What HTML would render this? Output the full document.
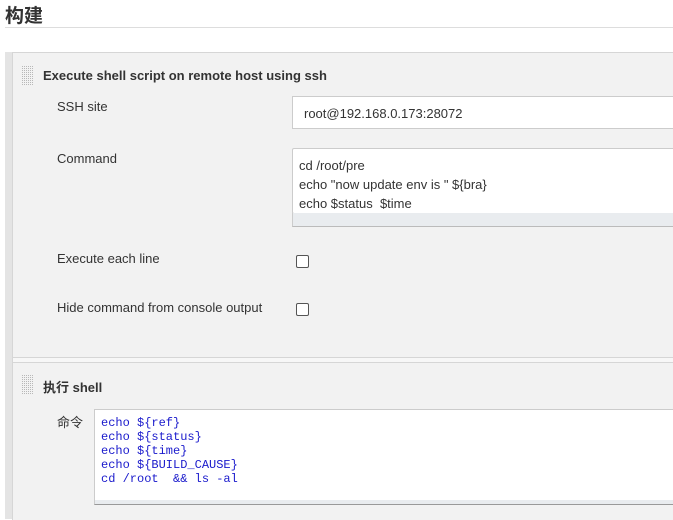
<!DOCTYPE html>
<html><head><meta charset="utf-8"><style>
body{margin:0;width:673px;height:519px;overflow:hidden;background:#fff;font-family:"Liberation Sans","Noto Sans CJK SC",sans-serif;color:#333;position:relative}
.a{position:absolute}
.lbl{font-size:13px;color:#333}
.cb{width:11px;height:11px;border:1px solid #555;border-radius:2px;background:#fff}
</style></head><body>
<svg width="0" height="0" style="position:absolute"><defs><pattern id="d" width="2" height="2" patternUnits="userSpaceOnUse"><rect width="1" height="1" fill="#b8b8b8"/></pattern></defs></svg>
<div class="a" style="left:5px;top:1px;font-size:19px;font-weight:bold;color:#333">构建</div>
<div class="a" style="left:5px;top:27px;width:668px;height:1px;background:#ddd"></div>
<div class="a" style="left:5px;top:52px;width:7px;height:467px;background:#e4e4e4"></div>
<div class="a" style="left:12px;top:52px;width:661px;height:467px;background:#f2f2f2;border-left:1px solid #d6d6d6;border-top:1px solid #d6d6d6"></div>
<div class="a" style="left:13px;top:357px;width:660px;height:1px;background:#d6d6d6"></div>
<div class="a" style="left:13px;top:358px;width:660px;height:4px;background:#f7f7f7"></div>
<div class="a" style="left:13px;top:362px;width:660px;height:1px;background:#d6d6d6"></div>

<svg class="a" style="left:22px;top:66px" width="12" height="20"><rect width="12" height="20" fill="url(#d)"/></svg>
<div class="a" style="left:43px;top:68px;font-size:13px;font-weight:bold;color:#333">Execute shell script on remote host using ssh</div>
<div class="a lbl" style="left:57px;top:99px">SSH site</div>
<div class="a" style="left:292px;top:96px;width:381px;height:31px;background:#fff;border:1px solid #ccc;border-right:none"></div>
<div class="a lbl" style="left:304px;top:106px">root@192.168.0.173:28072</div>
<div class="a lbl" style="left:57px;top:151px">Command</div>
<div class="a" style="left:292px;top:148px;width:381px;height:64px;background:#fff;border:1px solid #ccc;border-right:none;border-radius:2px 0 0 2px"></div>
<div class="a" style="left:292px;top:213px;width:381px;height:13px;background:#e9ecef;border-left:1px solid #ccc;border-bottom:1px solid #bbb"></div>
<div class="a lbl" style="left:299px;top:156px;line-height:19px">cd /root/pre<br>echo "now update env is " ${bra}<br>echo $status&nbsp; $time</div>
<div class="a lbl" style="left:57px;top:251px">Execute each line</div>
<div class="a cb" style="left:296px;top:255px"></div>
<div class="a lbl" style="left:57px;top:300px">Hide command from console output</div>
<div class="a cb" style="left:296px;top:303px"></div>

<svg class="a" style="left:22px;top:375px" width="12" height="20"><rect width="12" height="20" fill="url(#d)"/></svg>
<div class="a" style="left:43px;top:377px;font-size:13px;font-weight:bold;color:#333">执行 shell</div>
<div class="a lbl" style="left:57px;top:412px">命令</div>
<div class="a" style="left:94px;top:409px;width:579px;height:90px;background:#fff;border:1px solid #ccc;border-right:none"></div>
<div class="a" style="left:94px;top:500px;width:579px;height:4px;background:#e9ecef;border-left:1px solid #ccc;border-bottom:1px solid #999"></div>
<div class="a" style="left:101px;top:416px;font-family:'Liberation Mono','Noto Sans CJK SC',monospace;font-size:12px;line-height:14px;color:#1a1acc;white-space:pre">echo ${ref}
echo ${status}
echo ${time}
echo ${BUILD_CAUSE}
cd /root  && ls -al</div>
</body></html>
